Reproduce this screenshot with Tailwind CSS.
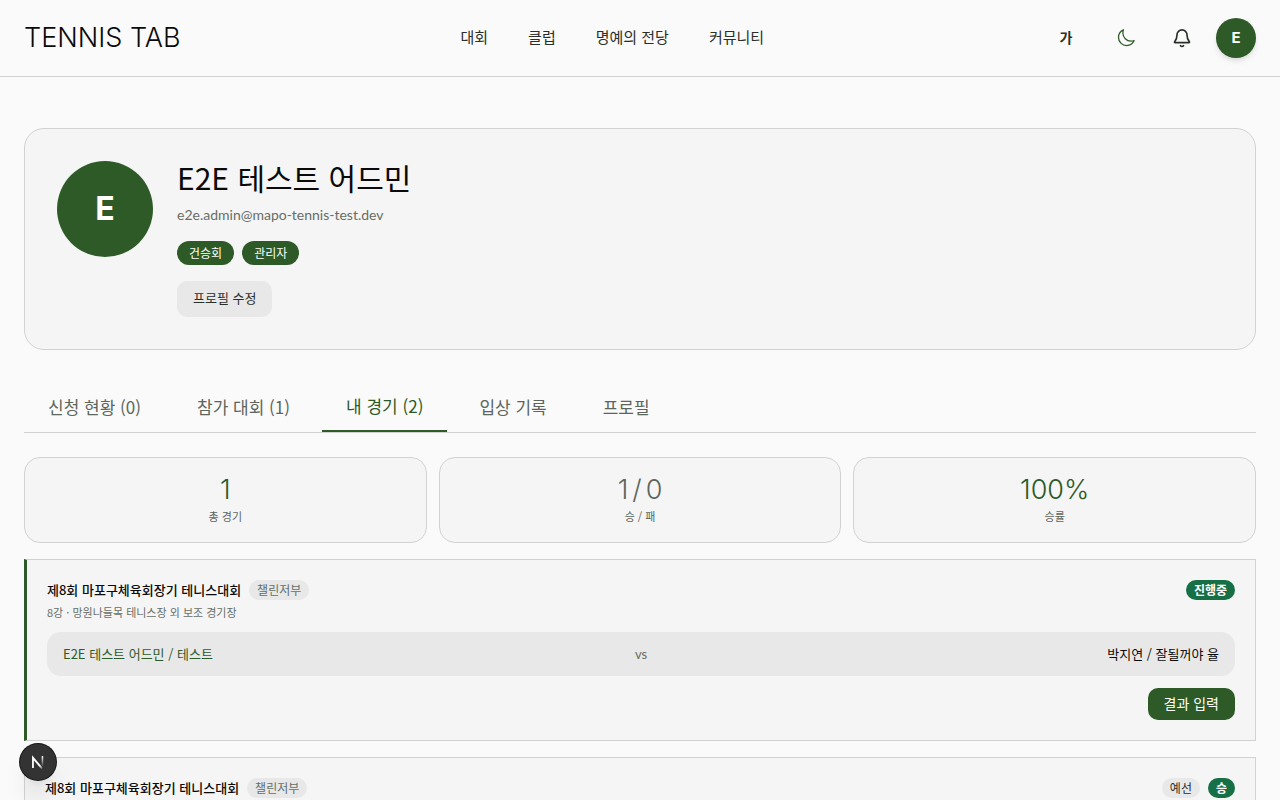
<!DOCTYPE html>
<html lang="ko">
<head>
  <meta charset="UTF-8" />
  <meta name="viewport" content="width=device-width, initial-scale=1.0" />
  <title>TENNIS TAB</title>
  <script src="https://cdn.jsdelivr.net/npm/@tailwindcss/browser@4"></script>
</head>
<body class="bg-[#fafafa] text-[#0a0a0a] font-['Noto_Sans_CJK_KR',sans-serif]">
  <!-- Header -->
  <header class="fixed inset-x-0 top-0 z-10 bg-[#fafafa] border-b border-[#d0d3d0]">
    <div class="flex items-center justify-between px-6 h-19">
      <a href="#" class="font-['Inter',sans-serif] font-light text-[27px] leading-9">TENNIS TAB</a>
      <nav class="flex items-center gap-10 pb-0.5 text-[15px] text-[#2a2f2a]">
        <a href="#">대회</a>
        <a href="#">클럽</a>
        <a href="#">명예의 전당</a>
        <a href="#">커뮤니티</a>
      </nav>
      <div class="flex items-center gap-4 text-[#2a2f2a]">
        <button class="w-11 h-11 pb-0.5 text-sm font-bold" title="글자 크기">가</button>
        <button class="w-11 h-11 flex items-center justify-center text-[#2d5a27]" aria-label="다크 모드">
          <svg class="w-5 h-5" viewBox="0 0 24 24" fill="none" stroke="currentColor" stroke-width="1.5" stroke-linecap="round" stroke-linejoin="round"><path d="M21.752 15.002A9.72 9.72 0 0 1 18 15.75c-5.385 0-9.75-4.365-9.75-9.75 0-1.33.266-2.597.748-3.752A9.753 9.753 0 0 0 3 11.25C3 16.635 7.365 21 12.75 21a9.753 9.753 0 0 0 9.002-5.998Z"/></svg>
        </button>
        <button class="w-9 h-9 flex items-center justify-center" aria-label="알림">
          <svg class="w-5 h-5" viewBox="0 0 24 24" fill="none" stroke="currentColor" stroke-width="2" stroke-linecap="round" stroke-linejoin="round"><path d="M6 8.2a6 6 0 0 1 12 0c0 5.3 1 6.3 2.8 8.3.4.5.2 1.1-.5 1.1H3.7c-.7 0-.9-.6-.5-1.1C5 14.5 6 13.5 6 8.2Z"/><path d="M10.2 21.3a2.2 2.2 0 0 0 3.6 0"/></svg>
        </button>
        <button class="w-10 h-10 rounded-full bg-[#2d5a27] text-white text-[15px] font-['Inter',sans-serif] font-bold shadow-md">E</button>
      </div>
    </div>
  </header>

  <main class="px-6 pt-32">
    <!-- Profile -->
    <section class="flex gap-6 p-8 rounded-[20px] border border-[#d0d3d0] bg-[#f5f5f5]">
      <div class="w-24 h-24 shrink-0 rounded-full bg-[#2d5a27] text-white text-[32px] font-['Inter',sans-serif] font-bold flex items-center justify-center">E</div>
      <div>
        <h1 class="text-[30px] leading-8 mb-3">E2E 테스트 어드민</h1>
        <p class="font-['Lato',sans-serif] text-sm leading-5 text-[#666e66] mb-4">e2e.admin@mapo-tennis-test.dev</p>
        <div class="flex gap-2 mb-4 text-xs leading-6 text-white">
          <span class="px-3 rounded-full bg-[#2d5a27]">건승회</span>
          <span class="px-3 rounded-full bg-[#2d5a27]">관리자</span>
        </div>
        <button class="h-9 px-4 pb-0.5 rounded-[10px] bg-[#e8e8e8] text-[13px] text-[#2a2f2a]">프로필 수정</button>
      </div>
    </section>

    <!-- Tabs -->
    <div class="flex gap-2 mt-8 mb-6 border-b border-[#d0d3d0] text-[17px] leading-6 text-[#5c665c]">
      <button class="px-6 py-3">신청 현황 (0)</button>
      <button class="px-6 py-3">참가 대회 (1)</button>
      <button class="px-6 py-3 border-b-2 border-[#2d5a27] text-[#2d5a27]">내 경기 (2)</button>
      <button class="px-6 py-3">입상 기록</button>
      <button class="px-6 py-3">프로필</button>
    </div>

    <!-- Stats -->
    <div class="grid grid-cols-3 gap-3 mb-4 text-center">
      <div class="p-4 rounded-2xl border border-[#d0d3d0] bg-[#f5f5f5]">
        <div class="font-['Inter',sans-serif] font-light text-[27px] leading-8 text-[#2d5a27]">1</div>
        <div class="text-[11px] leading-5 text-[#5c665c]">총 경기</div>
      </div>
      <div class="p-4 rounded-2xl border border-[#d0d3d0] bg-[#f5f5f5]">
        <div class="flex justify-center gap-1 font-['Inter',sans-serif] font-light text-[27px] leading-8 text-[#5c665c]">
          <span>1</span>
          <span>/</span>
          <span>0</span>
        </div>
        <div class="text-[11px] leading-5 text-[#5c665c]">승 / 패</div>
      </div>
      <div class="p-4 rounded-2xl border border-[#d0d3d0] bg-[#f5f5f5]">
        <div class="font-['Inter',sans-serif] font-light text-[27px] leading-8 text-[#2d5a27]">100%</div>
        <div class="text-[11px] leading-5 text-[#5c665c]">승률</div>
      </div>
    </div>

    <!-- Matches -->
    <div class="space-y-4">
      <article class="p-5 border border-l-3 border-[#d0d3d0] border-l-[#2d5a27] bg-[#f5f5f5]">
        <div class="flex items-start justify-between mb-3">
          <div>
            <div class="flex items-center gap-2">
              <h2 class="text-[13px] leading-5 font-medium">제8회 마포구체육회장기 테니스대회</h2>
              <span class="px-2 rounded-full bg-[#e8e8e8] text-xs leading-5 text-[#666e66]">챌린저부</span>
            </div>
            <p class="mt-1 text-[11px] leading-4 text-[#666e66]">8강 · 망원나들목 테니스장 외 보조 경기장</p>
          </div>
          <span class="px-2 rounded-full bg-[#176f46] text-white text-xs leading-5 font-bold">진행중</span>
        </div>
        <div class="flex items-center px-4 py-3 rounded-[14px] bg-[#e8e8e8] text-[13px] leading-5">
          <span class="flex-1 text-[#2d5a27]">E2E 테스트 어드민 / 테스트</span>
          <span class="font-['Lato',sans-serif] text-[#666e66]">vs</span>
          <span class="flex-1 text-right">박지연 / 잘될꺼야 율</span>
        </div>
        <div class="flex justify-end mt-3">
          <button class="h-8 px-4 pb-0.5 rounded-[10px] bg-[#2d5a27] text-white text-sm">결과 입력</button>
        </div>
      </article>

      <article class="p-5 border border-[#d0d3d0] bg-[#f5f5f5]">
        <div class="flex items-start justify-between">
          <div class="flex items-center gap-2">
            <h2 class="text-[13px] leading-5 font-medium">제8회 마포구체육회장기 테니스대회</h2>
            <span class="px-2 rounded-full bg-[#e8e8e8] text-xs leading-5 text-[#666e66]">챌린저부</span>
          </div>
          <div class="flex gap-2 text-xs leading-5">
            <span class="px-2 rounded-full bg-[#e8e8e8] text-[#2a2f2a]">예선</span>
            <span class="px-2 rounded-full bg-[#176f46] text-white font-bold">승</span>
          </div>
        </div>
      </article>
    </div>
  </main>

  <!-- Dev tools badge -->
  <button class="fixed left-5 bottom-5 w-9 h-9 rounded-full bg-[#333333] ring-1 ring-[#171717] shadow-xl flex items-center justify-center" aria-label="Open Next.js Dev Tools">
    <svg class="w-6 h-6" viewBox="0 0 20 20" fill="none">
      <defs>
        <linearGradient id="diagonal" x1="9" y1="10" x2="14" y2="16" gradientUnits="userSpaceOnUse"><stop offset="0.5" stop-color="#fff"/><stop offset="1" stop-color="#fff" stop-opacity="0"/></linearGradient>
        <linearGradient id="stem" x1="0" y1="5" x2="0" y2="14" gradientUnits="userSpaceOnUse"><stop stop-color="#fff"/><stop offset="1" stop-color="#fff" stop-opacity="0"/></linearGradient>
      </defs>
      <path d="M5.8 15V6.5L13.5 15.5" stroke="url(#diagonal)" stroke-width="1.5"/>
      <path d="M13.7 5v8.5" stroke="url(#stem)" stroke-width="1.3"/>
    </svg>
  </button>
</body>
</html>
